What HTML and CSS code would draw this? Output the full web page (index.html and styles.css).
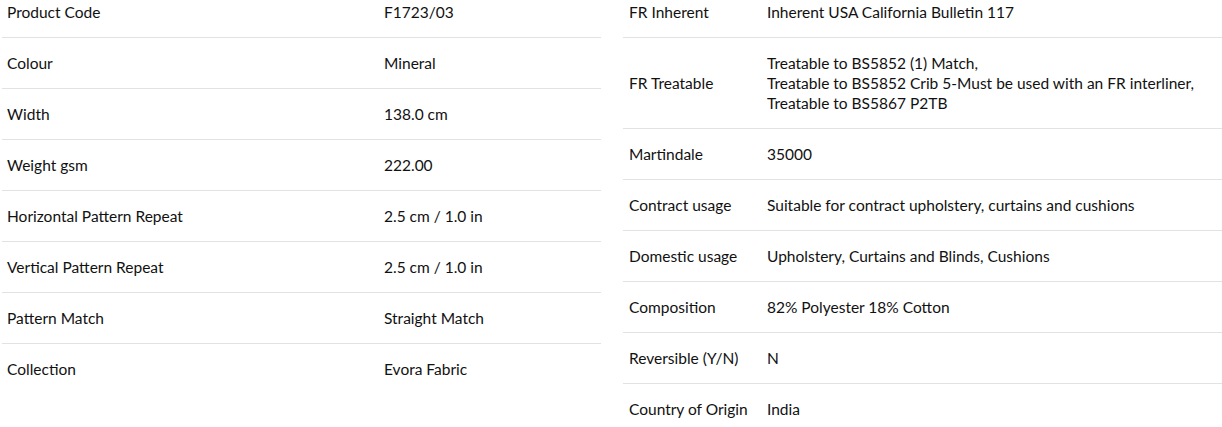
FILE: index.html
```html
<!DOCTYPE html>
<html>
<head>
<meta charset="utf-8">
<link rel="stylesheet" href="styles.css">
</head>
<body>
<div class="specs">
  <table class="spec-table spec-left">
    <tr><td class="label">Product Code</td><td class="value">F1723/03</td></tr>
    <tr><td class="label">Colour</td><td class="value">Mineral</td></tr>
    <tr><td class="label">Width</td><td class="value">138.0 cm</td></tr>
    <tr><td class="label">Weight gsm</td><td class="value">222.00</td></tr>
    <tr><td class="label">Horizontal Pattern Repeat</td><td class="value">2.5 cm / 1.0 in</td></tr>
    <tr><td class="label">Vertical Pattern Repeat</td><td class="value">2.5 cm / 1.0 in</td></tr>
    <tr><td class="label">Pattern Match</td><td class="value">Straight Match</td></tr>
    <tr><td class="label">Collection</td><td class="value">Evora Fabric</td></tr>
  </table>
  <table class="spec-table spec-right">
    <tr><td class="label">FR Inherent</td><td class="value">Inherent USA California Bulletin 117</td></tr>
    <tr><td class="label">FR Treatable</td><td class="value">Treatable to BS5852 (1) Match,<br>Treatable to BS5852 Crib 5-Must be used with an FR interliner,<br>Treatable to BS5867 P2TB</td></tr>
    <tr><td class="label">Martindale</td><td class="value">35000</td></tr>
    <tr><td class="label">Contract usage</td><td class="value">Suitable for contract upholstery, curtains and cushions</td></tr>
    <tr><td class="label">Domestic usage</td><td class="value">Upholstery, Curtains and Blinds, Cushions</td></tr>
    <tr><td class="label">Composition</td><td class="value">82% Polyester 18% Cotton</td></tr>
    <tr><td class="label">Reversible (Y/N)</td><td class="value">N</td></tr>
    <tr><td class="label">Country of Origin</td><td class="value">India</td></tr>
  </table>
</div>
</body>
</html>
```
FILE: styles.css
```css
html, body {
  margin: 0;
  padding: 0;
  background: #fff;
}
body {
  font-family: Lato, "Noto Sans", sans-serif;
  font-size: 15.5px;
  line-height: 20px;
  color: #111;
  overflow: hidden;
}
.specs {
  display: grid;
  grid-template-columns: 599px 599px;
  column-gap: 22px;
  padding-left: 2px;
  margin-top: -13px;
  align-items: start;
}
.spec-table {
  width: 599px;
  border-collapse: collapse;
}
.spec-table td {
  padding: 15px 5px;
  vertical-align: middle;
  border-bottom: 1px solid #e2e2e2;
}
.spec-table tr:last-child td {
  border-bottom: none;
}
.spec-left .label {
  width: 367px;
}
.spec-right .label {
  width: 128px;
  padding-left: 6px;
}
```
